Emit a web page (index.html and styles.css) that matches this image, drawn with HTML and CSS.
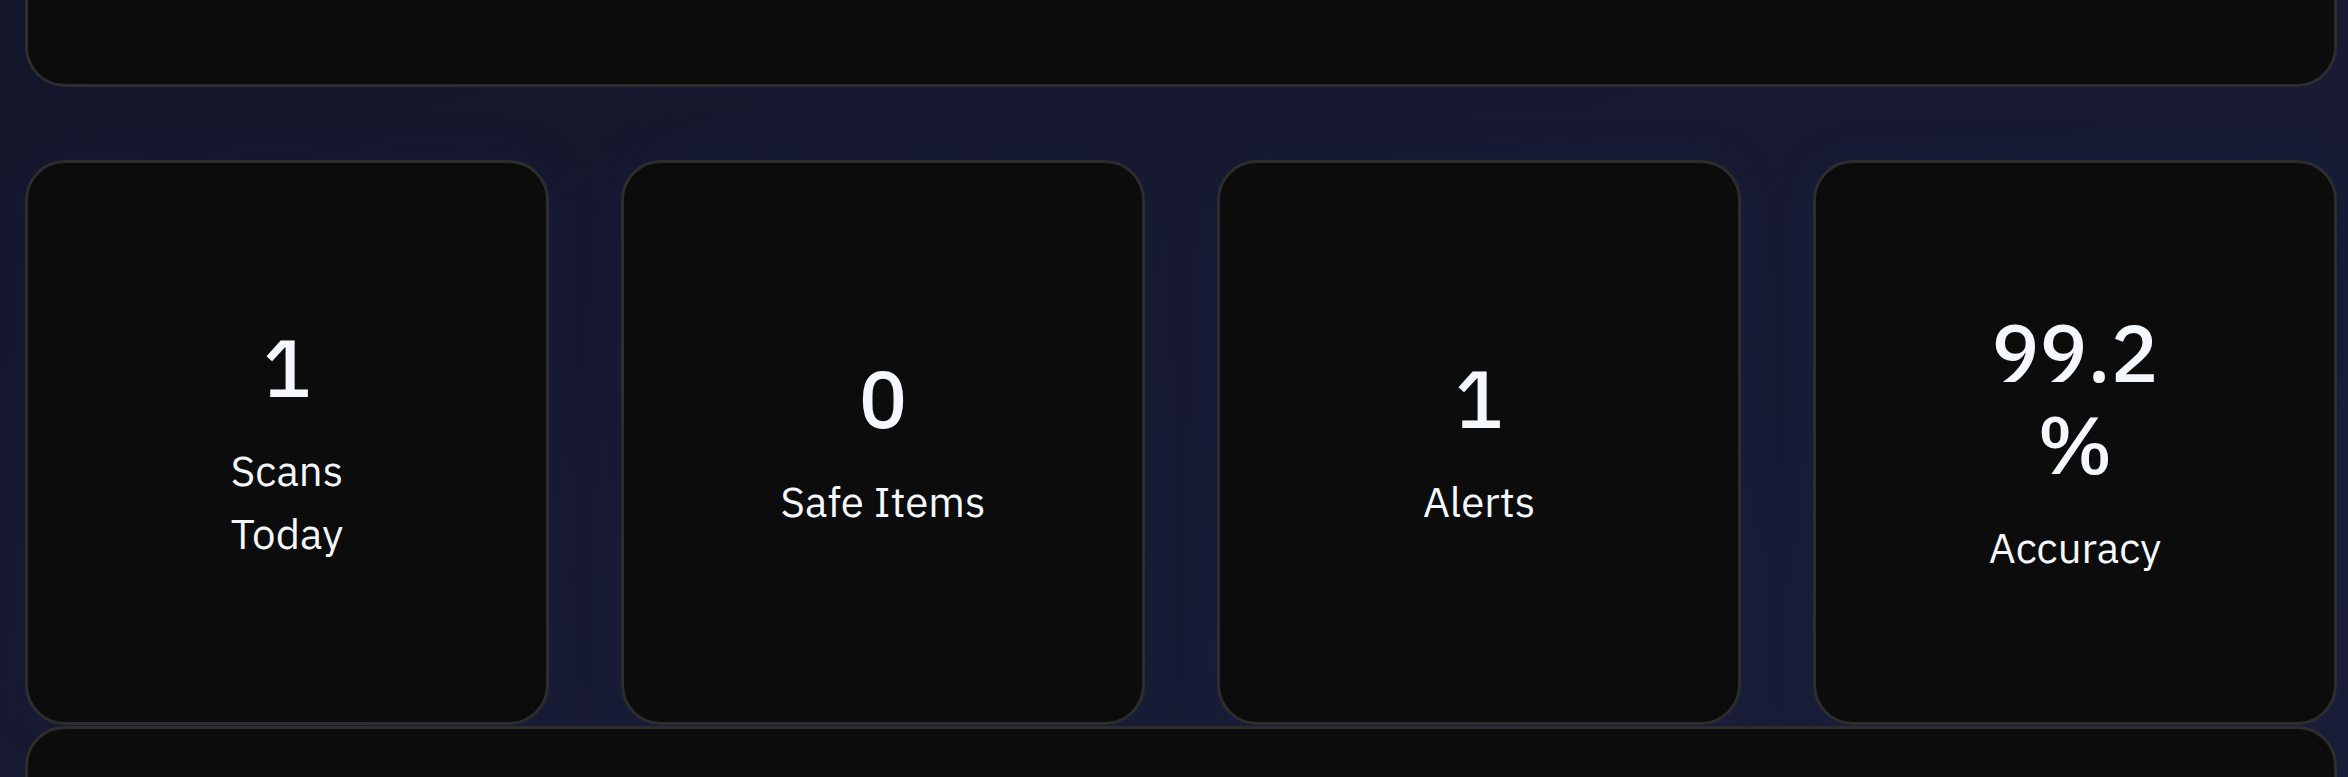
FILE: index.html
```html
<!DOCTYPE html>
<html lang="en">
<head>
<meta charset="utf-8">
<title>Dashboard</title>
<link rel="stylesheet" href="styles.css">
</head>
<body>
<main class="page">
  <section class="panel panel-top"></section>
  <section class="stats">
    <div class="stat">
      <div class="stat-body">
        <div class="stat-value">1</div>
        <div class="stat-label">Scans Today</div>
      </div>
    </div>
    <div class="stat">
      <div class="stat-body">
        <div class="stat-value">0</div>
        <div class="stat-label">Safe Items</div>
      </div>
    </div>
    <div class="stat">
      <div class="stat-body">
        <div class="stat-value">1</div>
        <div class="stat-label">Alerts</div>
      </div>
    </div>
    <div class="stat">
      <div class="stat-body">
        <div class="stat-value">99.2%</div>
        <div class="stat-label">Accuracy</div>
      </div>
    </div>
  </section>
  <section class="panel panel-bottom"></section>
</main>
</body>
</html>
```

FILE: styles.css
```css
html, body {
  margin: 0;
  height: 100%;
  overflow: hidden;
}

body {
  background: linear-gradient(160deg, #13152a 0%, #171a31 45%, #1b1e39 100%);
  font-family: "IBM Plex Sans", "Noto Sans", sans-serif;
  color: #f4f7fb;
}

.page {
  display: flex;
  flex-direction: column;
  padding: 0 11px 0 25px;
}

.panel {
  box-sizing: border-box;
  background: #0c0c0c;
  border: 3px solid #2d2d2d;
  border-radius: 40px;
}

.panel-top {
  margin-top: -120px;
  height: 207px;
}

.stats {
  display: grid;
  grid-template-columns: repeat(4, 524px);
  column-gap: 72px;
  margin-top: 73px;
}

.stat {
  box-sizing: border-box;
  height: 565px;
  background: #0c0c0c;
  border: 3px solid #2d2d2d;
  border-radius: 40px;
  box-shadow: 0 0 40px rgba(30, 36, 80, 0.25);
  display: flex;
  flex-direction: column;
  justify-content: center;
  padding: 0 152px;
  text-align: center;
}

.stat-body {
  overflow-wrap: anywhere;
}

.stat-value {
  font-size: 80px;
  line-height: 92px;
  font-weight: 500;
}

.stat-label {
  margin-top: 26px;
  font-size: 42px;
  line-height: 63px;
  font-weight: 400;
}

.panel-bottom {
  margin-top: 1px;
  height: 300px;
}
```
